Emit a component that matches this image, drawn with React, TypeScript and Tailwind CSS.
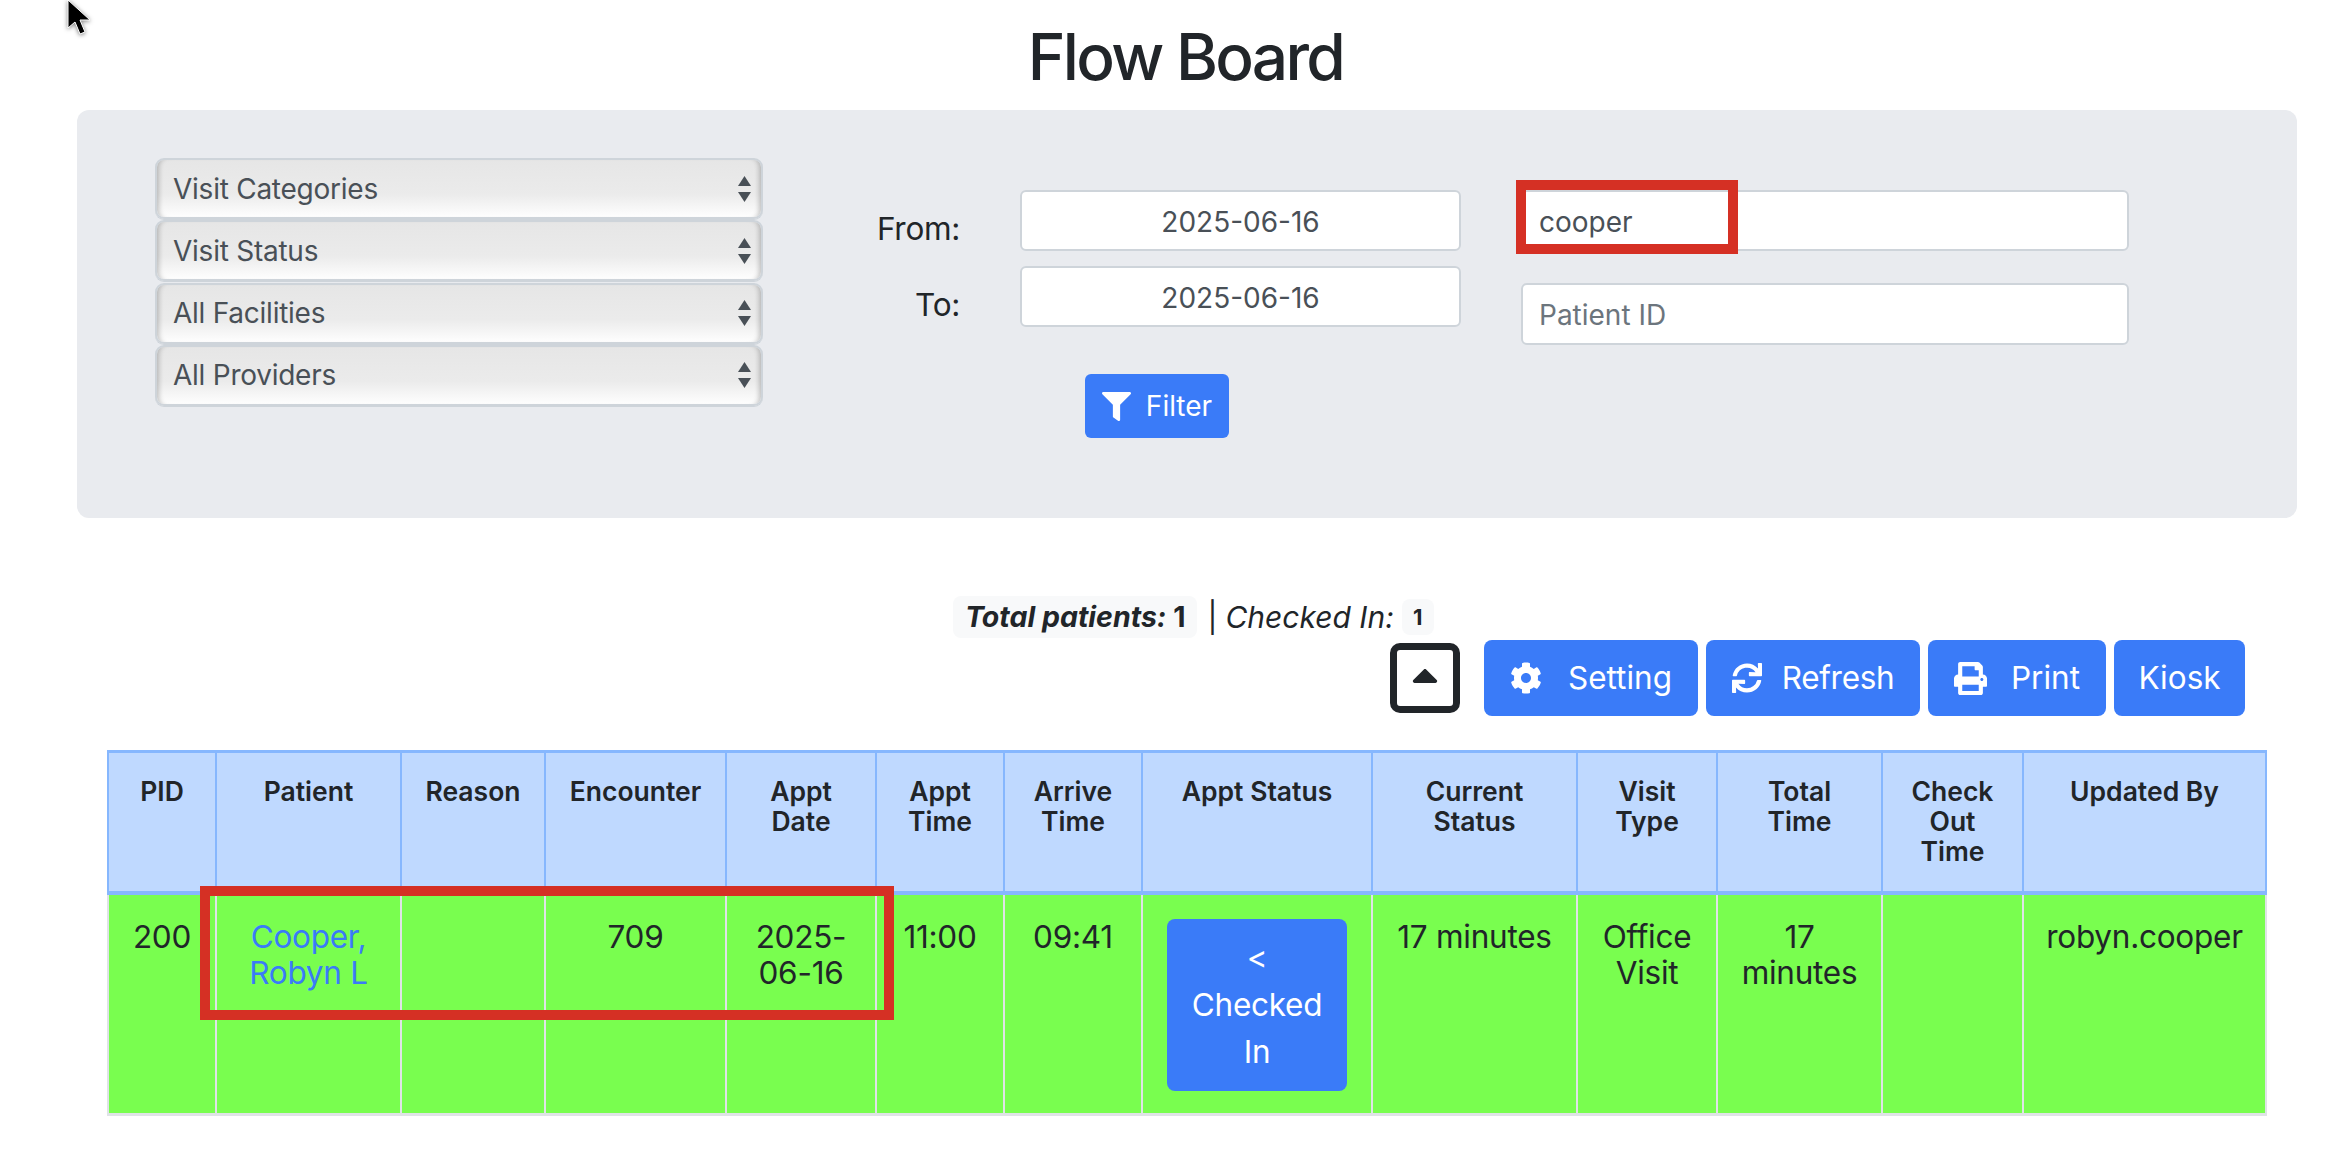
import { FaCaretUp, FaCog, FaFilter, FaPrint, FaSync } from "react-icons/fa";

const selects = ["Visit Categories", "Visit Status", "All Facilities", "All Providers"];

const columns = [
  { label: "PID", width: "w-[108px]" },
  { label: "Patient", width: "w-[185px]" },
  { label: "Reason", width: "w-[144px]" },
  { label: "Encounter", width: "w-[181px]" },
  { label: "Appt Date", width: "w-[150px]" },
  { label: "Appt Time", width: "w-[128px]" },
  { label: "Arrive Time", width: "w-[138px]" },
  { label: "Appt Status", width: "w-[230px]" },
  { label: "Current Status", width: "w-[205px]" },
  { label: "Visit Type", width: "w-[140px]" },
  { label: "Total Time", width: "w-[165px]" },
  { label: "Check Out Time", width: "w-[141px]" },
  { label: "Updated By", width: "w-[243px]" },
];

function SelectBox({ label }: { label: string }) {
  return (
    <div className="flex h-[61px] w-[608px] items-center justify-between rounded-[9px] border-2 border-[#ced4da] bg-gradient-to-b from-[#e6e6e6] via-[#ebebeb] via-60% to-[#fefefe] pl-[16px] pr-[10px] text-[28px] tracking-[-0.25px] text-[#495057] shadow-[inset_6px_0_5px_-4px_rgba(0,0,0,0.22),inset_-6px_0_5px_-4px_rgba(0,0,0,0.22),0_1px_0_#ced4da]">
      <span>{label}</span>
      <svg width="13" height="26" viewBox="0 0 13 26" className="fill-[#495057]">
        <path d="M6.5 0 13 10H0z" />
        <path d="M6.5 26 13 16H0z" />
      </svg>
    </div>
  );
}

function ActionButton({ icon, label, className }: { icon?: React.ReactNode; label: string; className: string }) {
  return (
    <button className={`flex h-[76px] items-center justify-center rounded-[8px] bg-[#3a7bf8] text-[31.5px] text-white ${className}`}>
      {icon}
      {label}
    </button>
  );
}

export default function App() {
  return (
    <div className="relative min-h-[1152px] overflow-hidden bg-white text-[#212529] [font-family:Inter,sans-serif]">
      {/* Mouse pointer from the capture */}
      <svg width="26" height="38" viewBox="0 0 26 38" className="absolute left-[67px] top-0 drop-shadow-[0_1px_2px_rgba(0,0,0,0.5)]">
        <path d="M1 0v28l7-6 5 12 5-2-5-12h10z" fill="#000" stroke="#fff" strokeWidth="1" />
      </svg>

      <div className="pl-[77px] pr-[43px]">
        <h1 className="flex h-[110px] items-center justify-center pt-[3px] pr-[3px] text-[64px] font-medium leading-none tracking-[-2.7px]">Flow Board</h1>

        {/* Filter panel */}
        <div className="flex h-[408px] rounded-[12px] bg-[#e9ebef] pl-[78px] pt-[48px]">
          <div className="flex flex-col gap-[1.3px]">
            {selects.map((s) => (
              <SelectBox key={s} label={s} />
            ))}
          </div>

          <div className="ml-[114px] flex flex-col pt-[32px]">
            <div className="flex items-center gap-[60px]">
              <span className="mt-[16px] w-[83px] whitespace-nowrap text-right text-[31.5px] leading-[40px] tracking-[-0.3px]">From:</span>
              <div className="flex h-[61px] w-[441px] items-center justify-center rounded-[6px] border-2 border-[#ced4da] bg-white pt-[2px] text-[28px] text-[#495057]">2025-06-16</div>
            </div>
            <div className="mt-[15px] flex items-center gap-[60px]">
              <span className="mt-[16px] w-[83px] text-right text-[31.5px] leading-[40px] tracking-[-0.3px]">To:</span>
              <div className="flex h-[61px] w-[441px] items-center justify-center rounded-[6px] border-2 border-[#ced4da] bg-white pt-[2px] text-[28px] text-[#495057]">2025-06-16</div>
            </div>
            <button className="ml-[208px] mt-[47px] flex h-[64px] w-[144px] items-center justify-center gap-[15px] rounded-[6px] bg-[#3a7bf8] text-[28px] text-white">
              <FaFilter size={29} />
              Filter
            </button>
          </div>

          <div className="ml-[60px] flex flex-col pt-[32px]">
            <div className="flex h-[61px] w-[608px] items-center rounded-[6px] border-2 border-[#ced4da] bg-white pl-[16px] pt-[2px] text-[28px] text-[#495057]">cooper</div>
            <div className="mt-[32px] flex h-[62px] w-[608px] items-center rounded-[6px] border-2 border-[#ced4da] bg-white pl-[16px] pt-[1px] text-[28px] text-[#6c757d]">Patient ID</div>
          </div>
        </div>

        {/* Totals */}
        <div className="mt-[78px] flex h-[42px] items-center pl-[876px] text-[30px] italic">
          <span className="flex h-[42px] items-center rounded-[8px] bg-[#f8f9fa] px-[12px] text-[28.5px] font-bold">
            Total patients:&nbsp;<span className="not-italic">1</span>
          </span>
          <span className="ml-[10px] not-italic">|</span>
          <span className="ml-[8px]">Checked In:</span>
          <span className="ml-[8px] flex h-[36px] w-[32px] items-center justify-center rounded-[8px] bg-[#f8f9fa] text-[22px] font-bold not-italic">1</span>
        </div>

        {/* Toolbar */}
        <div className="mt-[2px] flex items-center pl-[1313px]">
          <button className="flex h-[70px] w-[70px] items-center justify-center rounded-[10px] border-[7px] border-[#212529] bg-white pb-[6px]">
            <FaCaretUp size={42} />
          </button>
          <ActionButton className="ml-[24px] w-[214px] gap-[26px]" icon={<FaCog size={32} />} label="Setting" />
          <ActionButton className="ml-[8px] w-[214px] gap-[20px] tracking-[-0.3px]" icon={<FaSync size={30} />} label="Refresh" />
          <ActionButton className="ml-[8px] w-[178px] gap-[24px]" icon={<FaPrint size={33} />} label="Print" />
          <ActionButton className="ml-[8px] w-[131px]" label="Kiosk" />
        </div>

        {/* Flow table */}
        <div className="mt-[34px] pl-[30px]">
          <table className="w-[2158px] table-fixed border-collapse">
            <thead>
              <tr>
                {columns.map((c) => (
                  <th
                    key={c.label}
                    className={`${c.width} h-[141px] border-x-2 border-b-4 border-t-[3px] border-[#86b7fe] bg-[#bfd9ff] px-[20px] pt-[23px] align-top text-[26.5px] font-semibold leading-[30px]`}
                  >
                    {c.label}
                  </th>
                ))}
              </tr>
            </thead>
            <tbody>
              <tr className="bg-[#79fe4f] text-center text-[31.5px] leading-[36px] tracking-[-0.25px]">
                <Td>200</Td>
                <Td><span className="text-[#3a7bf8]">Cooper, Robyn L</span></Td>
                <Td />
                <Td>709</Td>
                <Td>2025-06-16</Td>
                <Td>11:00</Td>
                <Td>09:41</Td>
                <td className="h-[222px] border-x-2 border-b-[3px] border-[#dfe3e6] px-[16px] pt-[24px] align-top">
                  <button className="h-[172px] w-[180px] rounded-[8px] bg-[#3a7bf8] px-[16px] text-[31.5px] leading-[47px] text-white">
                    &lt; Checked In
                  </button>
                </td>
                <Td>17 minutes</Td>
                <Td>Office Visit</Td>
                <Td>17 minutes</Td>
                <Td />
                <Td>robyn.cooper</Td>
              </tr>
            </tbody>
          </table>
        </div>
      </div>

      {/* Red annotation boxes from the capture */}
      <div className="absolute left-[1516px] top-[180px] h-[74px] w-[222px] border-[10px] border-[#d53024]" />
      <div className="absolute left-[200px] top-[886px] h-[134px] w-[694px] border-[10px] border-[#d53024]" />
    </div>
  );
}

function Td({ children }: { children?: React.ReactNode }) {
  return <td className="h-[222px] border-x-2 border-b-[3px] border-[#dfe3e6] px-[12px] pt-[24px] align-top">{children}</td>;
}
